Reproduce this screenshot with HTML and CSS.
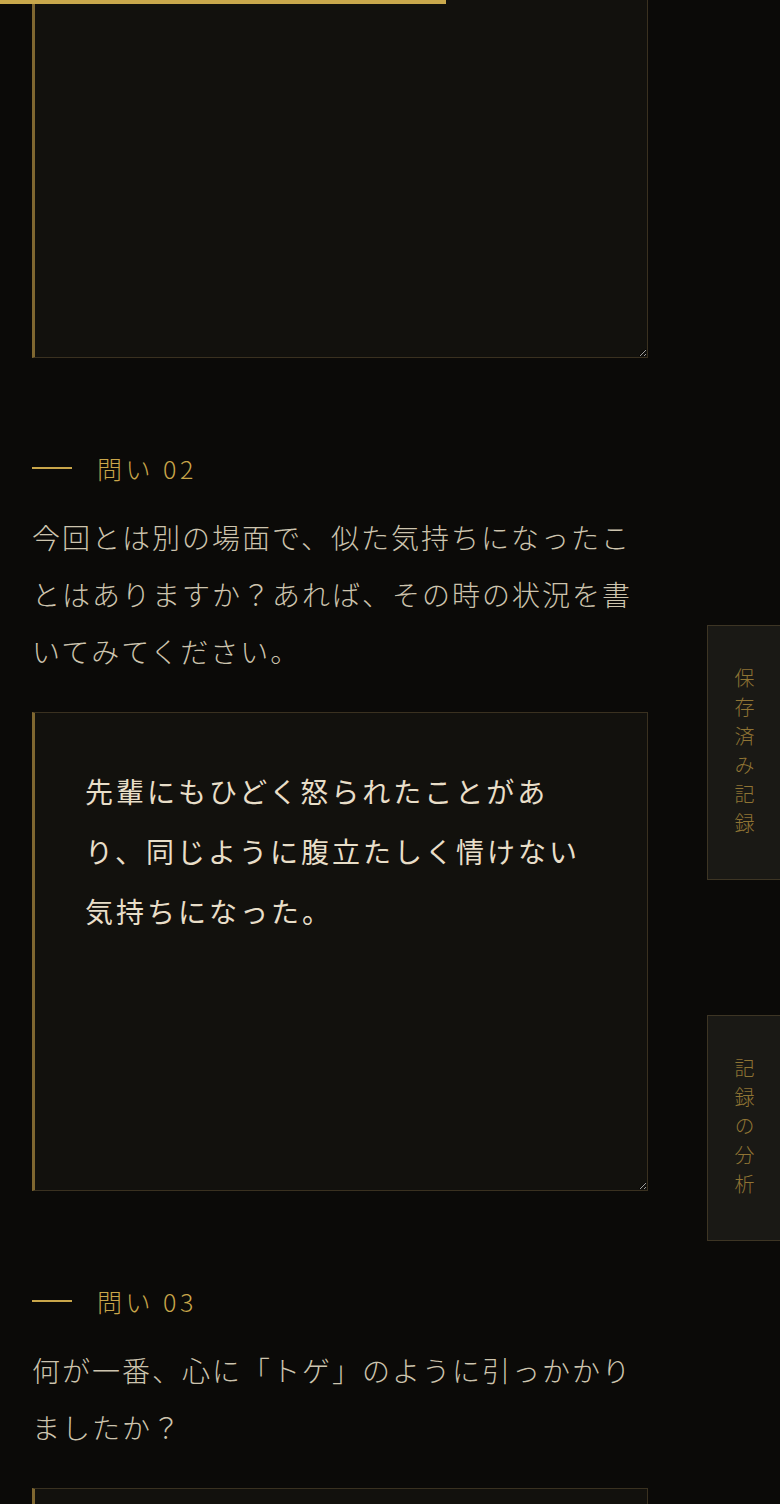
FILE: index.html
```html
<!DOCTYPE html>
<html lang="ja">
<head>
    <meta charset="UTF-8">
    <meta name="viewport" content="width=device-width, initial-scale=1.0">
    <title>振り返りノート</title>
    <link rel="stylesheet" href="styles.css">
</head>
<body>

<div class="progress"><div class="progress-bar"></div></div>

<main class="page">
    <section class="question">
        <textarea class="answer" aria-label="回答 01"></textarea>
    </section>

    <section class="question">
        <h3 class="question-label"><span class="dash"></span>問い 02</h3>
        <p class="question-text">今回とは別の場面で、似た気持ちになったことはありますか？あれば、その時の状況を書いてみてください。</p>
        <textarea class="answer" aria-label="回答 02">先輩にもひどく怒られたことがあり、同じように腹立たしく情けない気持ちになった。</textarea>
    </section>

    <section class="question">
        <h3 class="question-label"><span class="dash"></span>問い 03</h3>
        <p class="question-text">何が一番、心に「トゲ」のように引っかかりましたか？</p>
        <textarea class="answer" aria-label="回答 03"></textarea>
    </section>
</main>

<nav class="side-tabs">
    <a class="side-tab tab-saved" href="#"><span class="side-tab-label">保存済み記録</span></a>
    <a class="side-tab tab-analysis" href="#"><span class="side-tab-label">記録の分析</span></a>
</nav>

</body>
</html>
```

FILE: styles.css
```css
body {
    margin: 0;
    padding: 0;
    background-color: #0b0a08;
    color: #cfc6b0;
    font-family: "Noto Sans CJK JP", "Noto Sans", sans-serif;
    font-weight: 300;
}

.progress {
    position: fixed;
    top: 0;
    left: 0;
    width: 100%;
    height: 4px;
    z-index: 10;
}

.progress-bar {
    width: 446px;
    height: 4px;
    background-color: #c9a84c;
}

.page {
    width: 616px;
    margin-top: -121px;
    padding-left: 32px;
}

.question {
    margin-bottom: 95px;
}

.question-label {
    display: flex;
    align-items: center;
    gap: 25px;
    margin: 0 0 26px;
    height: 30px;
    font-size: 25px;
    font-weight: 300;
    letter-spacing: 0.14em;
    color: #c9a64a;
}

.question-label .dash {
    display: block;
    width: 40px;
    height: 2px;
    background-color: #c9a64a;
}

.question-text {
    margin: 0 0 32px;
    font-size: 28px;
    line-height: 57px;
    letter-spacing: 2px;
    color: #cdc4ae;
}

.answer {
    display: block;
    box-sizing: border-box;
    width: 616px;
    height: 479px;
    margin: 0;
    padding: 48px 50px;
    background-color: #12110d;
    border: 1px solid #3a3120;
    border-left: 3px solid #7f6730;
    border-radius: 0;
    color: #e8dec8;
    font-family: "Noto Sans CJK JP", "Noto Sans", sans-serif;
    font-size: 28px;
    font-weight: 400;
    line-height: 60px;
    letter-spacing: 3px;
    outline: none;
}

.side-tab {
    position: fixed;
    right: 0;
    width: 73px;
    box-sizing: border-box;
    display: flex;
    flex-direction: column;
    align-items: center;
    padding: 42px 0 0;
    background-color: #1a1915;
    border: 1px solid #3d3524;
    border-right: none;
    color: #8f7434;
    text-decoration: none;
}

.side-tab-label {
    writing-mode: vertical-rl;
    font-size: 20px;
    line-height: 22px;
    letter-spacing: 9px;
}

.tab-saved {
    top: 625px;
    height: 255px;
}

.tab-analysis {
    top: 1015px;
    height: 226px;
}
```
